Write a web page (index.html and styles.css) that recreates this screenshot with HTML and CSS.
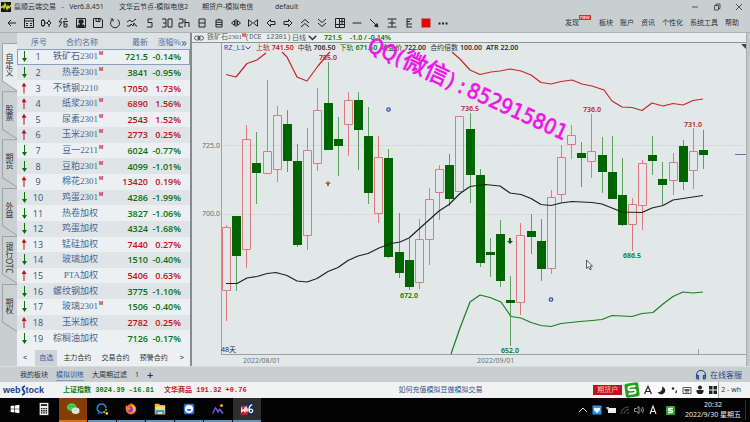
FILE: index.html
```html
<!DOCTYPE html>
<html lang="zh-CN">
<head>
<meta charset="utf-8">
<title>赢顺云端交易</title>
<link rel="stylesheet" href="styles.css">
</head>
<body>
<header class="titlebar">
  <svg class="app-icon" viewBox="0 0 10 10"><rect width="10" height="10" fill="#16180c"/><path d="M0 6l2-2 1 2 1-4 2 5 1-3 1 2 2-3" fill="none" stroke="#d8e020" stroke-width="1.3"/></svg>
  <span class="t-app">赢顺云端交易 &nbsp; - &nbsp; Ver6.8.451</span>
  <span class="t-node">文华云节点-模拟电信2</span>
  <span class="t-user">期货户-模拟电信</span>
  <span>default</span>
  <div class="win-controls">
    <button aria-label="最小化"><svg viewBox="0 0 8 8"><path d="M1 4h6"/></svg></button>
    <button aria-label="还原"><svg viewBox="0 0 8 8"><path d="M1.500 2.500h4v4.500h-4zM3 2.500V1h4v4.500H5.500"/></svg></button>
    <button aria-label="关闭"><svg viewBox="0 0 8 8"><path d="M1 1l6 6M7 1L1 7"/></svg></button>
  </div>
</header>

<div class="toolbar">
  <div class="tools">
    <button aria-label="返回"><svg viewBox="0 0 12 12"><path d="M10 6H2M5 3L2 6l3 3"/></svg></button>
    <button aria-label="报价"><svg viewBox="0 0 12 12"><path d="M1.500 1.500h9v9h-9zM1.500 4h9M3 6.500h2M7 6.500h2M3 8.500h2M7 8.500h2"/></svg></button>
    <button aria-label="K线"><svg viewBox="0 0 12 12"><path d="M1.500 3.500h3v5h-3zM3 2v1.500M3 8.500V10M7 6l2-2 2 2-2 2zM9 2.500V4M9 8v2M4.500 6H7"/></svg></button>
    <button aria-label="闪电下单"><svg viewBox="0 0 12 12"><path d="M5 1L2 5h3L2 10M7 2h3M6 4.500h5M7 4.500V10h3V7H7"/></svg></button>
    <button aria-label="账户"><svg viewBox="0 0 12 12"><path d="M1.500 1.500h9v9h-9z"/><path d="M4 3h4v3H4zM3 8h6v2H3zM5.500 6h1v2h-1z" fill="#222"/></svg></button>
    <button aria-label="保存"><svg viewBox="0 0 12 12"><path d="M1.500 1.500h7.500l1.500 1.500v7.500h-9zM4 1.500v3h4v-3M6.500 2v1.500"/></svg></button>
    <button aria-label="刷新"><svg viewBox="0 0 12 12"><path d="M3.500 2.500a4.500 4.500 0 1 0 5 0M1.500 2h2.500v2.500"/></svg></button>
    <button aria-label="走势"><svg viewBox="0 0 12 12"><path d="M1 5l3-2 2 2 4-3M1 9h3l1-2 2 2 1-3 2 3h1"/></svg></button>
    <button aria-label="5分钟"><svg viewBox="0 0 12 12"><path d="M8.500 2H4v3.500h4V10H3"/></svg></button>
    <button aria-label="30分钟"><svg viewBox="0 0 12 12"><path d="M1 2h4v8H1M2 6h3M7 2h4v8H7z"/></svg></button>
    <button aria-label="2小时"><svg viewBox="0 0 12 12"><path d="M1 2h4v4H1v4h4M7 2v8M7 5.500h4V10"/></svg></button>
    <button aria-label="日线"><svg viewBox="0 0 12 12"><path d="M3 2h6v8H3zM3 6h6"/></svg></button>
    <button aria-label="自定义周期"><svg viewBox="0 0 12 12"><path d="M3 3h6v7H3zM3 5.300h6M3 7.600h6M6 1.500V3"/></svg></button>
    <button aria-label="对比"><svg viewBox="0 0 12 12"><path d="M6 2v8M4.500 3.500L1.500 6l3 2.500zM7.500 3.500l3 2.500-3 2.500z"/></svg></button>
    <button aria-label="缩放"><svg viewBox="0 0 12 12"><path d="M1.500 2.500v7M10.500 2.500v7M2 3l3.500 3L2 9M10 3L6.500 6 10 9"/></svg></button>
    <button aria-label="左移"><svg viewBox="0 0 12 12"><path d="M5.500 2.500L2 6l3.500 3.500v-2h4.500v-3H5.500z"/></svg></button>
    <button aria-label="右移"><svg viewBox="0 0 12 12"><path d="M6.500 2.500L10 6 6.500 9.500v-2H2v-3h4.500z"/></svg></button>
    <button aria-label="上翻"><svg viewBox="0 0 12 12"><path d="M2 6l4-3.500L10 6M2 10l4-3.500 4 3.500"/></svg></button>
    <button aria-label="下翻"><svg viewBox="0 0 12 12"><path d="M2 2l4 3.500L10 2M2 6l4 3.500L10 6"/></svg></button>
    <button aria-label="分屏"><svg viewBox="0 0 12 12"><path d="M1.500 1.500h9v9h-9zM5.500 1.500v9M5.500 4.500h5M5.500 7.500h5M8 1.500v6M1.500 7.500h4"/></svg></button>
    <button aria-label="横线"><svg viewBox="0 0 12 12"><path d="M1.500 6h9"/></svg></button>
    <button aria-label="射线"><svg viewBox="0 0 12 12"><path d="M2 2l7 7"/><path d="M10 10L6.500 9 9 6.500z" fill="#222"/></svg></button>
    <button aria-label="区间线"><svg viewBox="0 0 12 12"><path d="M1.500 2h9M2.500 6h7M1.500 10h9M6 2.500v7"/></svg></button>
    <button aria-label="分割线"><svg viewBox="0 0 12 12"><path d="M4 1.500v9M4 2h5M4 4.500h3M4 7h5M4 10h5"/></svg></button>
    <button aria-label="颜色"><svg viewBox="0 0 12 12"><rect x="1.500" y="1.500" width="9" height="9" fill="#e00808" stroke="none"/></svg></button>
    <button aria-label="更多"><svg viewBox="0 0 12 12"><path d="M1.500 6.500h2M5 6.500h2M8.500 6.500h2" stroke-width="2"/></svg></button>
  </div>
  <nav class="menu">
    <a href="#">发现<span class="new">new</span></a>
    <a href="#">板块</a>
    <a href="#">账户</a>
    <a href="#">资讯</a>
    <a href="#">个性化</a>
    <a href="#">系统工具</a>
    <a href="#">帮助</a>
  </nav>
</div>

<main class="workspace">
  <nav class="side">
    <button class="side-tab on">自定义</button>
    <button class="side-tab">股票</button>
    <button class="side-tab">期货</button>
    <button class="side-tab">外盘</button>
    <button class="side-tab">银行OTC</button>
    <button class="side-tab">期权</button>
  </nav>

  <section class="panel">
    <table class="quotes">
      <colgroup><col class="c-dir"><col class="c-no"><col class="c-name"><col class="c-last"><col class="c-pct"><col></colgroup>
      <thead><tr><th></th><th class="no">序号</th><th class="name">合约名称</th><th>最新</th><th>涨幅%</th><th class="more">&raquo;</th></tr></thead>
      <tbody>
        <tr class="down sel"><td class="dir"></td><td class="no">1</td><td class="name">铁矿石2301<sup>M</sup></td><td>721.5</td><td>-0.14%</td><td></td></tr>
        <tr class="down"><td class="dir"></td><td class="no">2</td><td class="name">热卷2301<sup>M</sup></td><td>3841</td><td>-0.95%</td><td></td></tr>
        <tr class="up"><td class="dir"></td><td class="no">3</td><td class="name">不锈钢2210</td><td>17050</td><td>1.73%</td><td></td></tr>
        <tr class="up"><td class="dir"></td><td class="no">4</td><td class="name">纸浆2301<sup>M</sup></td><td>6890</td><td>1.56%</td><td></td></tr>
        <tr class="up"><td class="dir"></td><td class="no">5</td><td class="name">尿素2301<sup>M</sup></td><td>2543</td><td>1.52%</td><td></td></tr>
        <tr class="up"><td class="dir"></td><td class="no">6</td><td class="name">玉米2301<sup>M</sup></td><td>2773</td><td>0.25%</td><td></td></tr>
        <tr class="down"><td class="dir"></td><td class="no">7</td><td class="name">豆一2211<sup>M</sup></td><td>6024</td><td>-0.77%</td><td></td></tr>
        <tr class="down"><td class="dir"></td><td class="no">8</td><td class="name">豆粕2301<sup>M</sup></td><td>4099</td><td>-1.01%</td><td></td></tr>
        <tr class="up"><td class="dir"></td><td class="no">9</td><td class="name">棉花2301<sup>M</sup></td><td>13420</td><td>0.19%</td><td></td></tr>
        <tr class="down"><td class="dir"></td><td class="no">10</td><td class="name">鸡蛋2301<sup>M</sup></td><td>4286</td><td>-1.99%</td><td></td></tr>
        <tr class="down"><td class="dir"></td><td class="no">11</td><td class="name">热卷加权</td><td>3827</td><td>-1.06%</td><td></td></tr>
        <tr class="down"><td class="dir"></td><td class="no">12</td><td class="name">鸡蛋加权</td><td>4324</td><td>-1.68%</td><td></td></tr>
        <tr class="up"><td class="dir"></td><td class="no">13</td><td class="name">锰硅加权</td><td>7440</td><td>0.27%</td><td></td></tr>
        <tr class="down"><td class="dir"></td><td class="no">14</td><td class="name">玻璃加权</td><td>1510</td><td>-0.40%</td><td></td></tr>
        <tr class="up"><td class="dir"></td><td class="no">15</td><td class="name">PTA加权</td><td>5406</td><td>0.63%</td><td></td></tr>
        <tr class="down"><td class="dir"></td><td class="no">16</td><td class="name">螺纹钢加权</td><td>3775</td><td>-1.10%</td><td></td></tr>
        <tr class="down"><td class="dir"></td><td class="no">17</td><td class="name">玻璃2301<sup>M</sup></td><td>1506</td><td>-0.40%</td><td></td></tr>
        <tr class="up"><td class="dir"></td><td class="no">18</td><td class="name">玉米加权</td><td>2782</td><td>0.25%</td><td></td></tr>
        <tr class="down"><td class="dir"></td><td class="no">19</td><td class="name">棕榈油加权</td><td>7126</td><td>-0.17%</td><td></td></tr>
      </tbody>
    </table>
    <div class="panel-tabs">
      <button class="arrow">&lt;</button>
      <button class="on">自选</button>
      <button>主力合约</button>
      <button>交易合约</button>
      <button>预警合约</button>
      <button class="arrow">&gt;</button>
    </div>
  </section>

  <section class="chart">
    <div class="chart-head">
      <svg class="link-icon" viewBox="0 0 10 6"><path d="M4.500 1h-2a2 2 0 0 0 0 4h2zM5.500 1h2a2 2 0 0 1 0 4h-2zM3 3h4" fill="none" stroke="#444" stroke-width=".8"/></svg>
      <span class="contract">铁矿石2301<sup>M</sup></span>
      <span class="code">(DCE i2301)</span>
      <span class="period">日线 <svg viewBox="0 0 6 4"><path d="M.5.500L3 3 5.500.5" fill="none" stroke="#333"/></svg></span>
      <span class="g last">721.5</span>
      <span class="g">-1.0 / -0.14%</span>
    </div>
    <div class="legend">
      <span class="ind">RZ_L1<svg viewBox="0 0 6 4"><path d="M.5.500L3 3 5.500.5" fill="none" stroke="#2a4aa8"/></svg></span>
      <span class="r"><i>上轨</i> 741.50</span>
      <span><i>中轨</i> 706.50</span>
      <span class="g"><i>下轨</i> 671.50</span>
      <span><i>收盘价</i> 722.00</span>
      <span><i>合约倍数</i> 100.00</span>
      <span>ATR 22.00</span>
    </div>
    <svg class="plot" viewBox="192 53 554 313" role="img" aria-label="铁矿石2301 日线">
      <path class="grid" d="M221 145.500H746M221 214.500H746"/>
      <path class="axis" d="M221.500 43V354.500H746M698.500 349v5"/>
      <path d="M741 44h5v5z" fill="#3c4446"/>
      <path d="M735 154.500h11" stroke="#6a6ab8"/>
      <g id="candles"></g>
      <polyline class="line-up" points="226,74.5 236,77 247,63.5 257,60 266,53"/>
      <polyline class="line-up" points="282,52 287,57 297,77 307,81 318,66 328,54 330,52"/>
      <polyline class="line-up" points="452,52 460,59 470,70 480,74.5 491,72 500,71 510,69 521,71 531,75 541,82.5 551,84 561,81.5 572,80 582,84 592,86 604,90 612,101 622,107 632,107.5 642,110.5 652,103 663,106 673,103.5 683,105 693,100.5 703,99"/>
      <polyline class="line-mid" points="226,283.5 237,283.5 247,278 257,276.5 267,273.5 276,272.5 287,275.5 297,281 307,282 317,278.5 328,271.5 338,267.5 348,260.5 358,256 368,253.5 379,248 391,243.5 400,242 409,238 419,229 429,220 439,211 449,204.5 460,193.5 470,186.5 485,184.5 500,186 510,193 521,194.5 531,198.5 541,204.5 551,205.5 561,203 572,201.5 592,202.5 602,204 612,208 622,212 642,212.5 652,208 663,205.5 673,200 683,198.5 703,195.5"/>
      <polyline class="line-low" points="451,354 460,328 470,302 480,295 490,297.5 501,302 511,316.5 521,318 531,322.5 541,325.5 551,326.5 561,323.5 580,321.5 592,320.5 602,319.5 612,315.5 632,316.5 642,313.5 653,312.5 663,304 673,296.5 683,292 693,293 703,292"/>
      <g class="tick"><text x="220" y="148">725.0</text><text x="220" y="216">700.0</text></g>
      <g class="date"><text x="243" y="363">2022/08/01</text><text x="477" y="363">2022/09/01</text></g>
      <text class="days" x="221" y="352">48天</text>
      <g class="mark-r"><text x="328" y="60">755.0</text><text x="470" y="111">736.5</text><text x="592" y="112">736.0</text><text x="693" y="127">731.0</text></g>
      <g class="mark-g"><text x="409" y="298">672.0</text><text x="510" y="353">652.0</text><text x="632" y="258">686.5</text></g>
      <path d="M328 181l3 3h-2v2h-2v-2h-2z" fill="#b8681c"/>
      <path d="M510 244l3-3h-2v-3h-2v3h-2z" fill="#046404"/>
      <g fill="none" stroke="#2450b8" stroke-width="1.300"><circle cx="388.500" cy="109.500" r="1.700"/><circle cx="551" cy="299.500" r="1.700"/></g>
      <path d="M586.500 260v8.500l2-1.700 1.500 3 1.300-.7-1.300-2.900h2.500z" fill="#eef2f2" stroke="#333" stroke-width=".8"/>
      <g class="watermark" transform="translate(368 51) rotate(24.600)">
        <text x="-2">QQ(</text><text class="han" x="36">微信</text><text x="84">)</text><text x="97">:</text><text x="107">852915801</text>
      </g>
    </svg>
  </section>
  <div class="rail"></div>
</main>

<div class="boards">
  <a href="#">我的板块</a>
  <a href="#" class="on">模拟训练</a>
  <a href="#">大周期过滤</a>
  <a href="#">1</a>
  <button class="plus" aria-label="添加">+</button>
  <a href="#" class="support"><svg viewBox="0 0 12 10"><path d="M1.500 8V5a4.500 4.500 0 0 1 9 0v3M3.500 5.500v3.500H2v-3.500zM10 5.500V9H8.500v-3.500z" fill="none" stroke="#264a8c" stroke-width="1.200"/></svg>在线客服</a>
</div>

<div class="status">
  <span class="logo">web<svg viewBox="0 0 5 11"><path d="M4 1C1 2 1 4 2.500 5.500S4 9 1 10" fill="none" stroke="#10449c" stroke-width="1.800"/></svg>tock</span>
  <span class="g index">上证指数 3024.39 -16.81</span>
  <span class="r index">文华商品 191.32 +0.76</span>
  <a href="#" class="help">如何充值模拟豆做模拟交易</a>
  <span class="account">期货户</span>
  <div class="ime">
    <svg class="sogou" viewBox="0 0 16 16"><g transform="rotate(-8 8 8)"><rect x="1" y="1" width="14" height="14" rx="2" fill="#1fa01c"/><path d="M12 4.500H6.500C4 4.500 4 8 6.500 8h3c2.500 0 2.500 3.500 0 3.500H4" fill="none" stroke="#fff" stroke-width="2"/></g></svg>
    <svg viewBox="0 0 10 10"><path d="M1.500 9L5 1.500 8.500 9M3 6.500h4" fill="none" stroke="#222" stroke-width="1.200"/></svg>
    <svg viewBox="0 0 10 10"><path d="M6 1.500a4 4 0 1 1-4.500 5.500C4.500 8 7 5 6 1.500z" fill="#222"/></svg>
    <svg viewBox="0 0 10 10"><circle cx="4" cy="3.500" r="1.200" fill="#222"/><path d="M7 5.500q1 1.500-.5 2.500" fill="none" stroke="#222" stroke-width="1.300"/></svg>
    <svg viewBox="0 0 10 10"><path d="M1 2.500h8v6H1zM2.500 4.500h5M2.500 5.500h5M3 7h4" fill="none" stroke="#333" stroke-width=".8"/></svg>
    <svg viewBox="0 0 10 10"><circle cx="5" cy="2.500" r="2" fill="#222"/><path d="M1.500 5h7v2L7 9H3L1.500 7z" fill="#222"/></svg>
    <svg viewBox="0 0 10 10"><path d="M1 1h3.500v3.500H1zM5.500 1H9v3.500H5.500zM1 5.500h3.500V9H1zM5.500 5.500H9V9H5.500z" fill="#222"/></svg>
  </div>
  <span>2 - wh</span>
</div>

<footer class="taskbar">
  <button aria-label="开始"><svg viewBox="0 0 16 16"><path d="M3 4.500L7.300 4v3.700H3zM8 3.900L13 3.200v4.500H8zM3 8.400h4.300V12L3 11.500zM8 8.400h5v4.400L8 12.100z" fill="#fff"/></svg></button>
  <button aria-label="计算器"><svg viewBox="0 0 16 16"><path d="M3 1h10v14H3z" fill="#eee"/><path d="M4.500 3.500h7" stroke="#111" stroke-width="2"/><path d="M4.500 7.500h7M4.500 10h7M4.500 12.500h7" stroke="#111" stroke-width="1.500" stroke-dasharray="1.750 .9"/></svg></button>
  <button class="alert" aria-label="微信"><svg viewBox="0 0 16 16"><ellipse cx="6.500" cy="6" rx="5.500" ry="4.500" fill="#48d048"/><ellipse cx="11" cy="10" rx="4.500" ry="3.700" fill="#dfe6dc"/><path d="M4.500 5h.8M8 5h.8" stroke="#184" stroke-linecap="round"/><path d="M9.300 9.500h.5M12 9.500h.5" stroke="#555"/></svg></button>
  <button class="run" aria-label="企业微信"><svg viewBox="0 0 16 16"><path d="M9 12a5 5 0 1 1 3.500-5" fill="none" stroke="#2585dc" stroke-width="1.800"/><path d="M4 11l-1 3 3-1.500" fill="#2585dc"/><circle cx="12.500" cy="9" r="1.300" fill="#37b34a"/><circle cx="10.500" cy="11.500" r="1.300" fill="#f5a623"/><circle cx="13.500" cy="13" r="1.500" fill="#f5d020"/></svg></button>
  <button class="run" aria-label="Firefox"><svg viewBox="0 0 16 16"><path d="M3 3c0 1 .4 1.300 1 1.500C5 2.500 7 3 8 1c1.500 1.500 6 2.500 6 7a6 6 0 0 1-12 .5C1.500 6 2 4.500 3 3z" fill="#f4682c"/><path d="M9 2c2 2 4.500 3 4 6.500-1 3-4 4-6 3 3 0 4-3 2.500-4.500z" fill="#fcc028"/><circle cx="7.500" cy="8.500" r="3" fill="#8a3ad8"/><path d="M3 7c2-2 4 0 5 .5-2 0-1 2-3 1.500z" fill="#fa8a28"/></svg></button>
  <button class="run" aria-label="文件资源管理器"><svg viewBox="0 0 16 16"><path d="M2 2h5l1 1.500h6V14H2z" fill="#e6b845"/><path d="M3 5h10.500v9H3z" fill="#f8dc80"/><path d="M3 9h10v5h-2.500v-2.500h-5V14H3z" fill="#3a9adc"/></svg></button>
  <button class="run" aria-label="浏览器"><svg viewBox="0 0 16 16"><rect x="2" y="2" width="12" height="12" rx="2" fill="#2472d8"/><circle cx="8" cy="8" r="4.700" fill="#fff"/><path d="M5.500 8a2.500 2.500 0 0 0 5 0z" fill="#2472d8"/></svg></button>
  <button class="run" aria-label="图片"><svg viewBox="0 0 16 16"><path d="M1 13l4-8 3 4 2-2 5 6h-3l-2-3-2 3-3-5-2 5z" fill="#6a55d8"/><circle cx="12" cy="4" r="1.800" fill="#f09a30"/></svg></button>
  <button class="run active" aria-label="wh6"><svg viewBox="0 0 16 16"><rect x="1" y="1" width="14" height="14" fill="#1a2a60"/><rect x="1" y="4" width="8" height="11" fill="#c81822"/><path d="M2 6v5l2-2 1.500 2V6M7 5v6M7 8h2v3" fill="none" stroke="#fff" stroke-width="1.300"/><path d="M14 3c-3 1-4 4-3.500 7s4 2.500 4 0-3-2.500-4-.5" fill="none" stroke="#fff" stroke-width="1.500"/></svg></button>
  <div class="tray">
    <svg viewBox="0 0 12 12"><path d="M2 8l4-4 4 4" fill="none" stroke="#ddd"/></svg>
    <svg viewBox="0 0 12 12"><rect x="1.500" y="1.500" width="9" height="9" fill="#2898e8"/><path d="M3 4h6v2L6 9 3 6z" fill="#fff"/></svg>
    <svg viewBox="0 0 12 12"><path d="M3 4h8v5H3z" fill="#eee"/><path d="M1 3h3v2.500H2z" fill="#bbb"/></svg>
    <svg viewBox="0 0 12 12"><path d="M2 10c0-4 3-7 8-7M5 10c0-2.500 2-4.500 5-4.500M8 10l2-2" fill="none" stroke="#555"/></svg>
    <svg viewBox="0 0 12 12"><path d="M1.500 4.500h2l2.500-2v7l-2.500-2h-2zM8 4.500q1 1.500 0 3M9.500 3q2 3 0 6" fill="none" stroke="#aaa" stroke-width=".9"/></svg>
    <svg viewBox="0 0 12 12"><path d="M3 10l3-8 3 8M4 7.500h4" fill="none" stroke="#eee" stroke-width="1.100"/></svg>
    <svg class="sg" viewBox="0 0 12 12"><rect x="2" y="2" width="9" height="9" rx="1" fill="#28a828"/><path d="M9 4.500H5.500c-1.500 0-1.500 2 0 2h2c1.500 0 1.500 2 0 2H4" fill="none" stroke="#fff" stroke-width="1.300"/></svg>
    <div class="clock"><span>20:32</span><span>2022/9/30 星期五</span></div>
  </div>
</footer>
<script src="chart.js"></script>
</body>
</html>
```
FILE: styles.css
```css
* { box-sizing: border-box; }

body {
  margin: 0;
  height: 100vh;
  display: flex;
  flex-direction: column;
  overflow: hidden;
  background: #c9cfd1;
  color: #2c3236;
  font: 7px/10px "Noto Sans", "Noto Sans CJK SC", sans-serif;
}

button {
  border: 0;
  padding: 0;
  background: none;
  color: inherit;
  font: inherit;
}

a { color: inherit; text-decoration: none; }
svg { display: block; }
i { font-style: normal; font-weight: 400; }
.g { color: #0a780f; }
.r { color: #c4161c; }

/* title bar */
.titlebar {
  height: 14px;
  display: flex;
  align-items: center;
  padding: 0 7px 0 1px;
  white-space: pre;
}
.app-icon { width: 10px; height: 10px; margin-right: 3px; }
.t-app { flex: 0 0 105px; }
.t-node { flex: 0 0 83px; }
.t-user { flex: 0 0 73px; }
.win-controls { margin-left: auto; display: flex; gap: 14px; }
.win-controls svg { width: 8px; height: 8px; fill: none; stroke: #333; stroke-width: 0.8; }

/* toolbar */
.toolbar {
  height: 19px;
  display: flex;
  align-items: center;
  padding: 0 11px 0 3px;
  border-bottom: 1px solid #adb4b6;
}
.tools {
  flex: 0 0 61%;
  display: grid;
  grid-template-columns: repeat(26, 1fr);
  justify-items: center;
}
.tools svg { width: 12px; height: 12px; fill: none; stroke: #222; }
.menu { margin-left: auto; display: flex; gap: 7px; white-space: nowrap; }
.menu a:first-child { margin-right: 13px; position: relative; }
.new {
  position: absolute;
  left: 14px;
  top: -3px;
  padding: 0 1px;
  background: #e0282c;
  color: #fff;
  font-size: 5px;
  line-height: 5px;
}

/* workspace */
.workspace {
  flex: 1;
  min-height: 0;
  display: grid;
  grid-template-columns: 17px 175px 1fr 4px;
}

.side { display: flex; flex-direction: column; padding: 10px 0 34px 2px; }
.side-tab {
  flex: 1;
  position: relative;
  z-index: 0;
  padding-bottom: 4px;
  writing-mode: vertical-rl;
  text-align: center;
  font-size: 8px;
  line-height: 15px;
}
.side-tab::before, .side-tab::after {
  content: "";
  position: absolute;
  inset: 0;
  z-index: -2;
  background: #9da5a8;
  clip-path: polygon(0 0, 100% 0, 100% 100%, 0 80%);
}
.side-tab::after { inset: 1px 0 1px 1px; z-index: -1; background: #cbd1d3; }
.side-tab.on::after { background: #e8ecee; }

/* quote list */
.panel {
  display: flex;
  flex-direction: column;
  min-height: 0;
  background: #ecf0f2;
  border-right: 2px solid #858c90;
}
.quotes {
  flex: 1;
  width: 100%;
  table-layout: fixed;
  border-collapse: collapse;
  font: 600 9px/13px "Open Sans", "Noto Sans", sans-serif;
}
.c-dir { width: 14px; }
.c-no { width: 14px; }
.c-name { width: 59px; }
.c-last { width: 44px; }
.c-pct { width: 33px; }
.quotes th, .quotes td { padding: 0; text-align: right; white-space: nowrap; }
.quotes th {
  height: 16px;
  background: #dde2e5;
  color: #5673a0;
  font: 400 8px/13px "Noto Sans CJK SC", sans-serif;
}
.quotes th.more { color: #34548c; font-size: 12px; text-align: left; }
.quotes td.no { text-align: center; color: #34507c; font-weight: 400; }
.quotes .name { padding-right: 6px; }
.quotes td.name {
  color: #4a6690;
  font: 400 9px/13px "Liberation Serif", "Noto Sans CJK SC", serif;
}
.quotes tbody tr:nth-child(even) { background: #dfe4e7; }
.quotes tbody .sel { outline: 1px solid #8ba0c0; outline-offset: -1px; }
sup { color: #d01c24; font: 700 5px/5px "Liberation Sans", sans-serif; vertical-align: 4px; }
.quotes sup { display: inline-block; width: 6px; margin-right: -6px; text-align: center; }
.up { color: #bc1218; }
.down { color: #0a700c; }
.dir::before {
  content: "";
  display: block;
  width: 5px;
  height: 11px;
  margin: 0 auto;
  background: currentColor;
  clip-path: polygon(0 4px, 50% 0, 100% 4px, 3px 4px, 3px 100%, 2px 100%, 2px 4px);
}
.down .dir::before { transform: rotate(180deg); }

.panel-tabs {
  height: 16px;
  margin-top: 4px;
  display: flex;
  justify-content: space-between;
  padding: 0 4px;
  white-space: nowrap;
}
.panel-tabs .on { padding: 0 4px; margin: 0 -4px; background: #ccd3da; color: #34609c; }
.panel-tabs .arrow { width: 8px; }

/* chart */
.chart { display: flex; flex-direction: column; min-width: 0; background: #e2e8e8; }
.chart-head {
  height: 10px;
  display: flex;
  align-items: center;
  padding-left: 2px;
  border-bottom: 1px solid #8d9496;
  background: #e8eded;
  line-height: 9px;
  white-space: nowrap;
}
.chart-head svg { height: 6px; }
.link-icon { width: 10px; margin-right: 3px; }
.contract, .code { font-family: "Liberation Serif", "Noto Sans CJK SC", serif; color: #555c60; }
.contract { width: 38px; }
.chart-head sup { vertical-align: 2px; }
.code { width: 47px; font-family: "Liberation Mono", monospace; }
.period { width: 32px; display: flex; align-items: center; gap: 2px; color: #555c60; }
.last { width: 26px; }
.chart-head .g, .legend { font-weight: 600; }
.legend {
  height: 10px;
  display: flex;
  align-items: center;
  gap: 4px;
  padding-left: 32px;
  line-height: 10px;
  white-space: nowrap;
}
.legend svg { width: 6px; height: 4px; }
.ind { display: flex; align-items: center; width: 28px; color: #2a4aa8; font-family: "Liberation Mono", monospace; font-weight: 400; }
.plot { flex: 1; min-height: 0; width: 100%; overflow: visible; position: relative; }
.grid { stroke: #d0d6d7; stroke-dasharray: 2 1; }
.axis { fill: none; stroke: #9ba2a4; }
.line-up, .line-mid, .line-low { fill: none; stroke-width: 1.2; stroke-linejoin: round; }
.line-up { stroke: #c4262c; }
.line-mid { stroke: #1c2022; }
.line-low { stroke: #1c7c24; }
.rise path { fill: none; stroke: #e07a80; }
.fall path { fill: #006400; stroke: none; }
.fall .wick { stroke: #5ca060; }
.tick { fill: #666c70; font-size: 7px; text-anchor: end; }
.date { fill: #6c7276; font-size: 7px; }
.days { fill: #24247c; font-size: 7px; }
.mark-r, .mark-g { font-size: 7px; font-weight: 600; text-anchor: middle; }
.mark-r { fill: #b81c22; }
.mark-g { fill: #0a700c; }
.watermark {
  fill: #f014e8;
  stroke: #f014e8;
  stroke-width: 0.7;
  font-family: "DejaVu Sans Condensed", "DejaVu Sans", sans-serif;
  font-size: 21px;
}
.watermark .han { font-family: "Noto Sans CJK SC", sans-serif; font-size: 24px; }
.rail { background: #c0c6c9; border-left: 1px solid #a9b0b3; }

/* board tabs */
.boards {
  height: 16px;
  display: flex;
  align-items: center;
  gap: 8px;
  padding: 0 8px 0 20px;
  border-top: 1px solid #d8dddf;
}
.boards .on { color: #2c5ca4; box-shadow: 0 1px #7f9cc8; }
.plus { font-size: 11px; font-weight: 600; }
.support { margin-left: auto; display: flex; align-items: center; gap: 3px; color: #264a8c; font-size: 8px; }
.support svg { width: 12px; height: 10px; }

/* status row */
.status {
  height: 16px;
  display: flex;
  align-items: center;
  padding: 0 9px 0 3px;
  background: #f1f3f3;
  white-space: nowrap;
}
.logo { width: 60px; display: flex; align-items: center; color: #10449c; font: 700 9px/11px "Liberation Sans", sans-serif; }
.logo svg { width: 5px; height: 11px; }
.index { margin-right: 10px; font: 700 7px/10px "Liberation Mono", "Noto Sans CJK SC", monospace; }
.help { margin: 0 15% 0 auto; color: #2c508c; }
.account { padding: 0 4px; background: #c0121c; color: #f0c8c8; }
.ime { display: flex; align-items: center; gap: 3px; margin: 0 2px; background: #fafbfb; border-right: 1px solid #a8b0b8; }
.ime svg { width: 10px; height: 10px; }
.ime .sogou { width: 16px; height: 16px; }

/* taskbar */
.taskbar { height: 24px; display: flex; gap: 1px; padding-left: 1px; background: #030303; color: #e8e8e8; }
.taskbar button { width: 28px; display: grid; place-items: center; border-bottom: 2px solid transparent; }
.taskbar button svg { width: 14px; height: 14px; }
.taskbar .run { border-bottom-color: #5c94c4; }
.taskbar .alert { background: #843c08; border-bottom-color: #d87018; }
.taskbar .active { background: #2e2e2e; }
.tray { margin-left: auto; display: flex; align-items: center; gap: 2px; padding-right: 4px; }
.tray svg { width: 12px; height: 12px; }
.tray .sg { margin-left: 3px; }
.clock { display: flex; flex-direction: column; align-items: center; padding: 0 4px 0 7px; border-right: 1px solid #333; }
```
FILE: chart.js
```js
// One entry per day: direction, body top, body bottom, high, low.
const days = [
  ["r",227,290,225,321],["g",216,256,216,291],["r",139,249,125,268],["g",163,173,132,204],
  ["r",151,173,80,173],["r",115,169,106,182],["g",124,161,110,172],["g",161,245,144,247],
  ["r",150,235,128,250],["r",110,163,88,171],["g",103,150,62,150],["g",139,146,117,176],
  ["r",100,124,92,156],["g",100,130,92,170],["g",136,193,107,204],["r",157,213,136,223],
  ["g",158,257,149,258],["g",252,273,213,278],["g",260,287,239,290],["r",239,282,219,289],
  ["r",199,239,188,265],["r",169,192,165,220],["g",165,199,154,206],["r",116,191,116,192],
  ["g",129,175,113,203],["g",175,263,169,267],["g",252,255,238,277],["g",234,281,220,287],
  ["g",300,303,276,346],["r",235,302,223,315],["g",231,237,214,254],["g",241,269,219,281],
  ["r",197,268,190,274],["r",157,194,145,203],["r",135,144,125,159],["g",153,158,142,187],
  ["r",151,161,114,178],["g",155,172,137,193],["g",172,199,136,199],["g",195,225,158,226],
  ["r",204,224,198,251],["r",163,205,160,230],["g",155,161,136,175],["g",179,185,162,205],
  ["r",162,180,153,195],["g",146,182,140,190],["r",151,170,128,189],["g",150,155,130,169]
];
const step = 10.15;
document.getElementById("candles").innerHTML = days.map(([dir, top, bottom, high, low], i) => {
  const x = Math.round(226 + i * step) + 0.5;
  if (dir === "r") {
    return `<g class="rise"><path d="M${x - 4} ${top + 0.5}h8V${bottom + 0.5}h-8zM${x} ${high}V${top}M${x} ${bottom + 1}V${low}"/></g>`;
  }
  return `<g class="fall"><path class="wick" d="M${x} ${high}V${low}"/><path d="M${x - 4.5} ${top}h9V${bottom}h-9z"/></g>`;
}).join("");
```
